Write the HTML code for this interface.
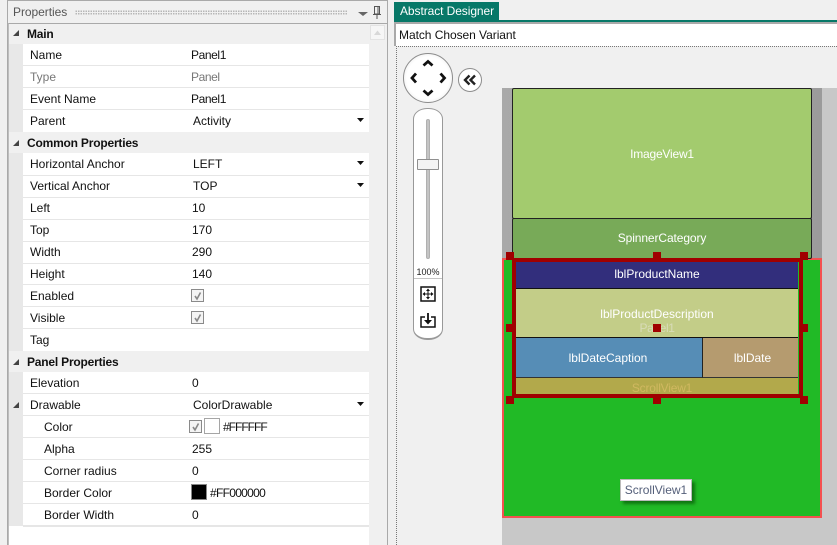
<!DOCTYPE html>
<html><head><meta charset="utf-8">
<style>
html,body{margin:0;padding:0}
body{width:837px;height:545px;overflow:hidden;position:relative;background:#f0f0f0;font-family:"Liberation Sans",sans-serif;font-size:12px;color:#111}
div{position:absolute;box-sizing:border-box}
.t{white-space:nowrap;line-height:16px;height:16px}
.b{font-weight:bold;letter-spacing:-.2px}
.g{color:#777}
.n{letter-spacing:-.4px}
.l{left:0;width:346px;height:1px;background:#e6e6e6}
.c{color:#fff;text-align:center;white-space:nowrap;line-height:16px;height:16px}
.h{width:8px;height:8px;background:#a00000}
.cb{width:13px;height:13px;border:1px solid #8a8a8a;background:#f4f4f4}
svg{position:absolute;overflow:visible}
</style></head><body>

<!-- Left panel frame -->
<div style="left:7px;top:0;width:381px;height:545px;border:1px solid #a9a9a9;border-bottom:0;border-width:1px 1px 0 1px;background:#f0f0f0"></div>
<div class="t" style="left:13px;top:4px;color:#555;letter-spacing:-.05px">Properties</div>
<div style="left:75px;top:10px;width:273px;height:5px;background-image:radial-gradient(#b5b5b5 .7px,transparent .8px);background-size:2.5px 2.5px"></div>
<svg style="left:358px;top:11px" width="12" height="6"><path d="M0 1H10L5 5Z" fill="#666"/></svg>
<svg style="left:372px;top:6px" width="10" height="13"><path d="M2.500 .5H7.500V8H2.500ZM1 8.500H9M5 9V13M6 1V8" stroke="#555" fill="none"/></svg>

<div style="left:8px;top:23px;width:379px;height:522px;border-top:1px solid #a9a9a9;border-left:1px solid #bdbdbd;background:#f0f0f0"></div>
<div style="left:9px;top:24px;width:14px;height:502px;background:#e8e8e8"></div>
<div style="left:9px;top:24px;width:360px;height:20px;background:#f0f0f0"></div>
<div style="left:9px;top:526px;width:360px;height:19px;background:#fff"></div>
<div style="left:370px;top:25px;width:15px;height:15px;background:#f6f6f6;border:1px solid #e3e3e3"></div>
<svg style="left:374px;top:30px" width="9" height="5"><path d="M0 5L3.500 .5L7 5Z" fill="#d8d8d8"/></svg>

<!-- Property grid -->
<div style="left:23px;top:44px;width:346px;height:482px;background:#fff">
<div class="l" style="top:21px"></div><div class="l" style="top:43px"></div><div class="l" style="top:65px"></div>
<div class="l" style="top:131px"></div><div class="l" style="top:153px"></div><div class="l" style="top:175px"></div><div class="l" style="top:197px"></div><div class="l" style="top:219px"></div><div class="l" style="top:240px"></div><div class="l" style="top:262px"></div><div class="l" style="top:284px"></div>
<div class="l" style="top:349px"></div><div class="l" style="top:371px"></div><div class="l" style="top:393px"></div><div class="l" style="top:415px"></div><div class="l" style="top:437px"></div><div class="l" style="top:459px"></div><div class="l" style="top:481px;height:2px"></div>
</div>
<div style="left:9px;top:132px;width:360px;height:21px;background:#f0f0f0"></div>
<div style="left:9px;top:351px;width:360px;height:21px;background:#f0f0f0"></div>

<!-- Category triangles -->
<svg style="left:12px;top:29px" width="8" height="8"><path d="M7 1V7H1Z" fill="#444"/></svg>
<svg style="left:12px;top:139px" width="8" height="8"><path d="M7 1V7H1Z" fill="#444"/></svg>
<svg style="left:12px;top:358px" width="8" height="8"><path d="M7 1V7H1Z" fill="#444"/></svg>
<svg style="left:12px;top:401px" width="8" height="8"><path d="M7 1V7H1Z" fill="#444"/></svg>

<!-- Labels -->
<div class="t b" style="left:27px;top:26px">Main</div>
<div class="t" style="left:30px;top:47px">Name</div><div class="t n" style="left:191px;top:47px">Panel1</div>
<div class="t g" style="left:30px;top:69px">Type</div><div class="t g n" style="left:191px;top:69px">Panel</div>
<div class="t" style="left:30px;top:91px">Event Name</div><div class="t n" style="left:191px;top:91px">Panel1</div>
<div class="t" style="left:30px;top:113px">Parent</div><div class="t" style="left:193px;top:113px">Activity</div>
<div class="t b" style="left:27px;top:135px">Common Properties</div>
<div class="t" style="left:30px;top:156px">Horizontal Anchor</div><div class="t" style="left:193px;top:156px">LEFT</div>
<div class="t" style="left:30px;top:178px">Vertical Anchor</div><div class="t" style="left:193px;top:178px">TOP</div>
<div class="t" style="left:30px;top:200px">Left</div><div class="t" style="left:192px;top:200px">10</div>
<div class="t" style="left:30px;top:222px">Top</div><div class="t" style="left:192px;top:222px">170</div>
<div class="t" style="left:30px;top:244px">Width</div><div class="t" style="left:192px;top:244px">290</div>
<div class="t" style="left:30px;top:266px">Height</div><div class="t" style="left:192px;top:266px">140</div>
<div class="t" style="left:30px;top:288px">Enabled</div>
<div class="t" style="left:30px;top:310px">Visible</div>
<div class="t" style="left:30px;top:332px">Tag</div>
<div class="t b" style="left:27px;top:354px">Panel Properties</div>
<div class="t" style="left:30px;top:375px">Elevation</div><div class="t" style="left:192px;top:375px">0</div>
<div class="t" style="left:30px;top:397px">Drawable</div><div class="t" style="left:193px;top:397px">ColorDrawable</div>
<div class="t" style="left:44px;top:419px">Color</div><div class="t" style="left:223px;top:419px;letter-spacing:-1px">#FFFFFF</div>
<div class="t" style="left:44px;top:441px">Alpha</div><div class="t" style="left:192px;top:441px">255</div>
<div class="t" style="left:44px;top:463px">Corner radius</div><div class="t" style="left:192px;top:463px">0</div>
<div class="t" style="left:44px;top:485px">Border Color</div><div class="t" style="left:210px;top:485px;letter-spacing:-.7px">#FF000000</div>
<div class="t" style="left:44px;top:507px">Border Width</div><div class="t" style="left:192px;top:507px">0</div>

<!-- Dropdown arrows -->
<svg style="left:357px;top:118px" width="8" height="5"><path d="M0 0H7L3.500 4Z" fill="#111"/></svg>
<svg style="left:357px;top:161px" width="8" height="5"><path d="M0 0H7L3.500 4Z" fill="#111"/></svg>
<svg style="left:357px;top:183px" width="8" height="5"><path d="M0 0H7L3.500 4Z" fill="#111"/></svg>
<svg style="left:357px;top:402px" width="8" height="5"><path d="M0 0H7L3.500 4Z" fill="#111"/></svg>

<!-- Checkboxes -->
<div class="cb" style="left:191px;top:289px"></div>
<svg style="left:193px;top:291px" width="10" height="10"><path d="M2 5L4 8L7.500 1.500" stroke="#888" stroke-width="1.600" fill="none"/></svg>
<div class="cb" style="left:191px;top:311px"></div>
<svg style="left:193px;top:313px" width="10" height="10"><path d="M2 5L4 8L7.500 1.500" stroke="#888" stroke-width="1.600" fill="none"/></svg>
<div class="cb" style="left:189px;top:420px"></div>
<svg style="left:191px;top:422px" width="10" height="10"><path d="M2 5L4 8L7.500 1.500" stroke="#888" stroke-width="1.600" fill="none"/></svg>
<div style="left:204px;top:418px;width:16px;height:16px;border:1px solid #a5a5a5;background:#fff"></div>
<div style="left:191px;top:484px;width:16px;height:16px;border:1px solid #888;background:#000"></div>

<!-- Right: tab -->
<div style="left:394px;top:0;width:443px;height:23px;background:#f0f0f0"></div>
<div style="left:394px;top:2px;width:105px;height:19px;background:#077868"></div>
<div style="left:394px;top:20px;width:443px;height:2px;background:#077868"></div>
<div class="t" style="left:400px;top:3px;color:#fff;letter-spacing:-.08px">Abstract Designer</div>
<div style="left:394px;top:22px;width:443px;height:24px;border-top:2px solid #a9a9a9;border-left:2px solid #a9a9a9;background:#fff"></div>
<div class="t" style="left:399px;top:27px;letter-spacing:-.05px">Match Chosen Variant</div>
<div style="left:396px;top:46px;width:441px;height:1px;background-image:linear-gradient(90deg,#777 50%,transparent 50%);background-size:2px 1px"></div>
<div style="left:396px;top:46px;width:1px;height:499px;background-image:linear-gradient(#777 50%,transparent 50%);background-size:1px 2px"></div>

<!-- Navigator -->
<div style="left:403px;top:53px;width:50px;height:50px;border-radius:50%;border:1.500px solid #8c8c8c;background:radial-gradient(circle,#fff 62%,#e0e0e0 92%)"></div>
<svg style="left:403px;top:53px" width="50" height="50"><path d="M20.500 12.500L25 8.500L29.500 12.500M20.500 37.500L25 41.500L29.500 37.500M13 20.500L9 25L13 29.500M37.500 20.500L41.500 25L37.500 29.500" stroke="#111" stroke-width="2.800" fill="none"/></svg>
<div style="left:458px;top:68px;width:24px;height:24px;border-radius:50%;border:1.500px solid #8c8c8c;background:#fff"></div>
<svg style="left:458px;top:68px" width="24" height="24"><path d="M11.500 7.500L7 12L11.500 16.500M17 7.500L12.500 12L17 16.500" stroke="#222" stroke-width="2.400" fill="none"/></svg>

<!-- Zoom slider -->
<div style="left:413px;top:108px;width:30px;height:232px;border-radius:14px/11px;border:1px solid #999;border-bottom-width:2px;background:#fff"></div>
<div style="left:426px;top:119px;width:4px;height:140px;background:#c4c4c4;border:1px solid #b0b0b0;border-radius:2px"></div>
<div style="left:417px;top:159px;width:22px;height:11px;background:#f3f3f3;border:1px solid #8f8f8f;border-radius:1px"></div>
<div class="t" style="left:413px;top:264px;width:30px;text-align:center;font-size:9px;color:#222">100%</div>
<div style="left:414px;top:278px;width:28px;height:1px;background:#c4c4c4"></div>
<svg style="left:420px;top:286px" width="16" height="16"><rect x="1" y="1" width="14" height="14" fill="#fff" stroke="#111" stroke-width="1.500"/><path d="M8 3V13M3 8H13" stroke="#111"/><path d="M8 2.500L10 5H6ZM8 13.500L10 11H6ZM2.500 8L5 6V10ZM13.500 8L11 6V10Z" fill="#111"/></svg>
<svg style="left:420px;top:312px" width="16" height="16"><path d="M5 5H1V15H15V5H11" fill="none" stroke="#111" stroke-width="1.500"/><path d="M8 1V10" stroke="#111" stroke-width="1.800"/><path d="M4 8H12L8 12.500Z" fill="#111"/></svg>

<!-- Canvas -->
<div style="left:502px;top:88px;width:335px;height:457px;background:#c8c8c8"></div>
<div style="left:502px;top:88px;width:320px;height:172px;background:linear-gradient(90deg,#a9a9a9,#9b9b9b)"></div>
<div style="left:502px;top:258px;width:320px;height:260px;background:#21ba26;border:2px solid #f45050"></div>

<div style="left:512px;top:88px;width:300px;height:131px;background:#a3cb6e;border:1px solid #222;border-top-width:1.500px;border-radius:2px"></div>
<div class="c" style="left:512px;top:146px;width:300px;letter-spacing:-.2px">ImageView1</div>
<div style="left:512px;top:218px;width:300px;height:41px;background:#78aa58;border:1px solid #222;border-radius:2px"></div>
<div class="c" style="left:512px;top:230px;width:300px;letter-spacing:-.1px">SpinnerCategory</div>

<div style="left:516px;top:261px;width:282px;height:28px;background:#322e7c;border-bottom:1px solid #111"></div>
<div class="c" style="left:516px;top:266px;width:282px">lblProductName</div>
<div style="left:516px;top:289px;width:282px;height:49px;background:#c3cd88;border-bottom:1px solid #111"></div>
<div class="c" style="left:516px;top:306px;width:282px">lblProductDescription</div>
<div class="c" style="left:616px;top:320px;width:82px;color:#d8dcb8;letter-spacing:-.4px">Panel1</div>
<div style="left:516px;top:338px;width:186px;height:40px;background:#568db6;border-bottom:1px solid #333"></div>
<div class="c" style="left:515px;top:350px;width:186px">lblDateCaption</div>
<div style="left:702px;top:338px;width:96px;height:40px;background:#b59b6f;border-left:1px solid #222;border-bottom:1px solid #333"></div>
<div class="c" style="left:705px;top:350px;width:95px">lblDate</div>
<div style="left:516px;top:378px;width:282px;height:16px;background:#b2a94b"></div>
<div class="c" style="left:521px;top:380px;width:282px;color:#d0b860;letter-spacing:-.2px">ScrollView1</div>

<!-- Selection -->
<div style="left:512px;top:258px;width:291px;height:140px;border:4px solid #a00000"></div>
<div class="h" style="left:506px;top:252px"></div><div class="h" style="left:653px;top:252px"></div><div class="h" style="left:800px;top:252px"></div>
<div class="h" style="left:506px;top:324px"></div><div class="h" style="left:653px;top:324px"></div><div class="h" style="left:800px;top:324px"></div>
<div class="h" style="left:506px;top:396px"></div><div class="h" style="left:653px;top:396px"></div><div class="h" style="left:800px;top:396px"></div>

<!-- Tooltip -->
<div style="left:620px;top:479px;width:72px;height:22px;background:#fff;border:1px solid #bbb;box-shadow:3px 3px 3px rgba(0,60,0,.55)"></div>
<div class="t" style="left:620px;top:482px;width:72px;text-align:center;color:#55607a">ScrollView1</div>
</body></html>
